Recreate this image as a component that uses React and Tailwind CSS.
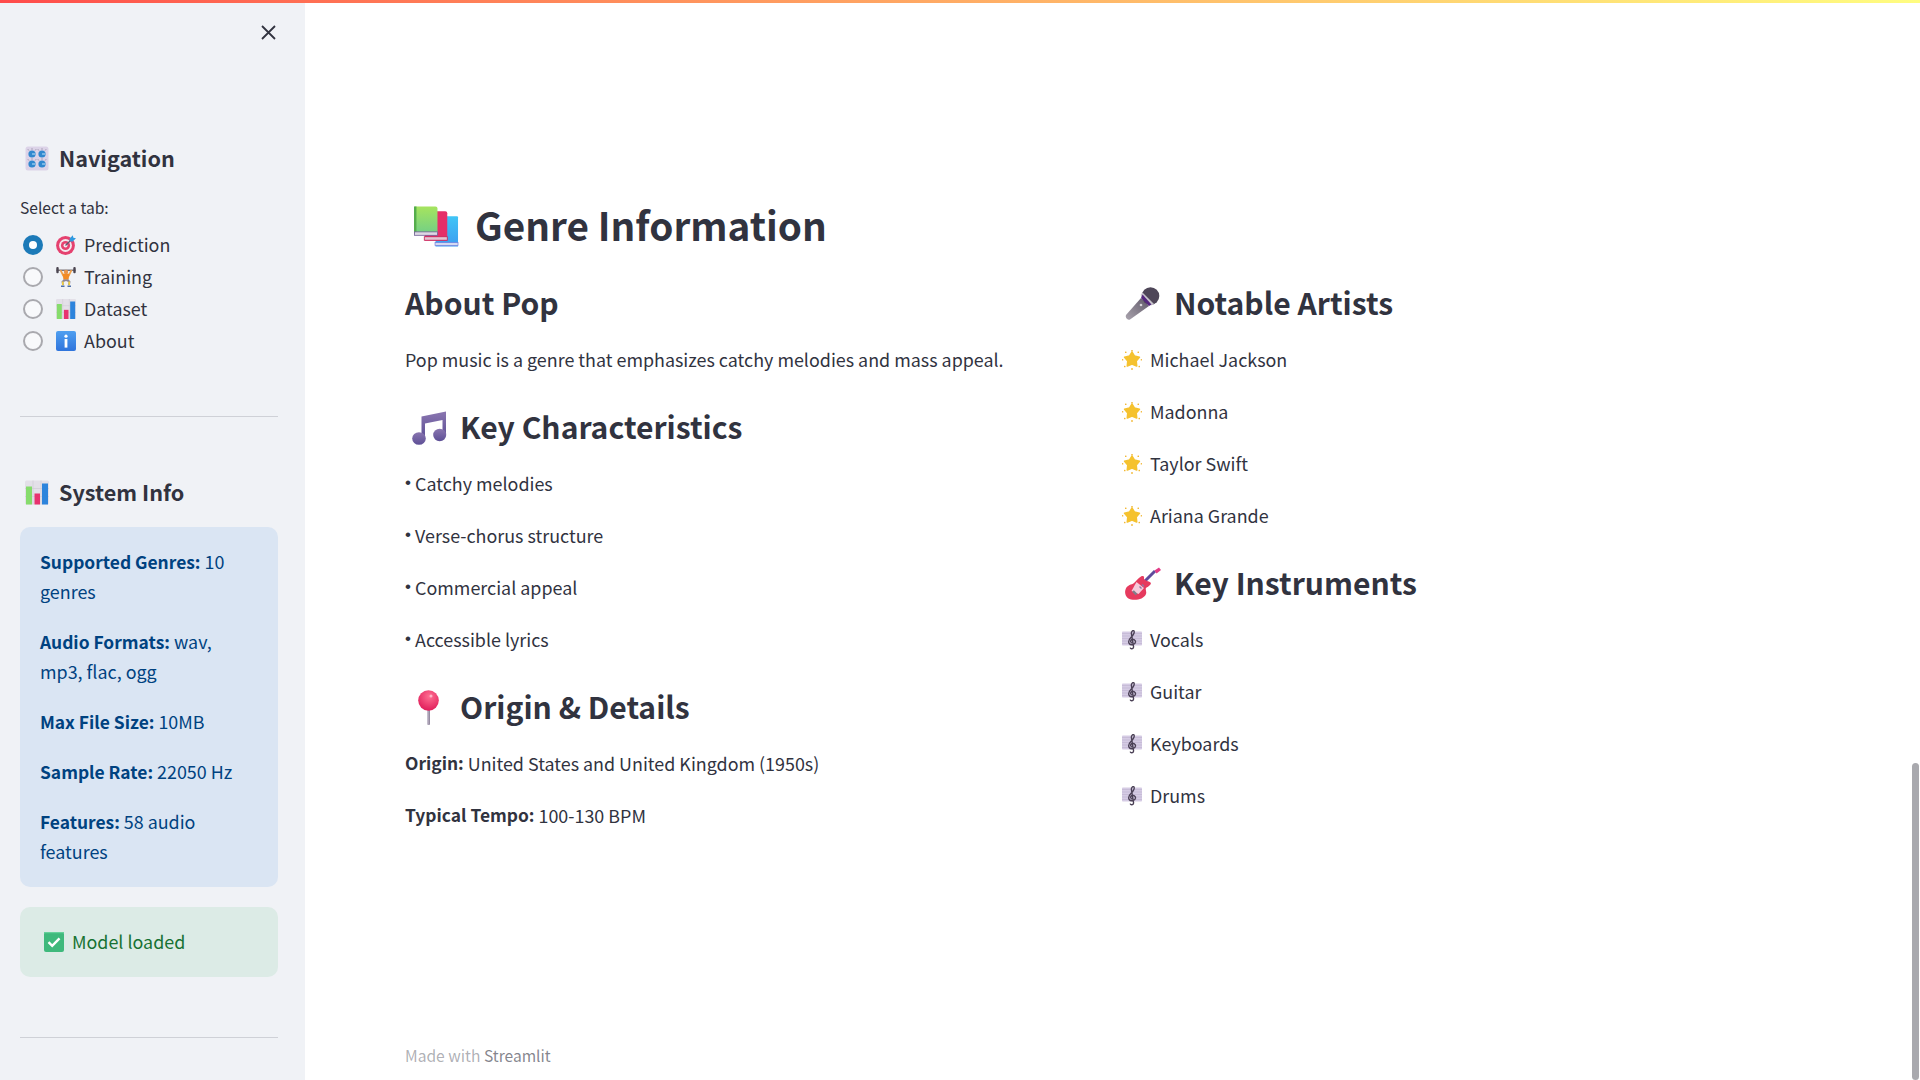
import React from "react";

const Knobs = ({ cls }) => (
  <svg viewBox="0 0 24 25" className={cls}>
    <rect x="0.5" y="0.5" width="23" height="24" rx="2.5" fill="#dcd3e8" />
    {[[7, 8], [17, 8], [7, 18], [17, 18]].map(([x, y], i) => (
      <g key={i}>
        <circle cx={x} cy={y} r="3.6" fill="#3188cf" />
        <path d={`M${x} ${y}h3`} stroke="#a9d6f2" strokeWidth="1.200" />
        <path d={`M${x - 4} ${y - 4.6}l.8 1M${x} ${y - 5.6}v1.200M${x + 4} ${y - 4.6}l-.8 1`} stroke="#77748a" strokeWidth=".8" />
      </g>
    ))}
  </svg>
);

const Target = ({ cls }) => (
  <svg viewBox="0 0 20 20" className={cls}>
    <circle cx="9.500" cy="10.500" r="9.400" fill="#e5416f" />
    <circle cx="9.500" cy="10.500" r="6.400" fill="#f4e8ee" />
    <circle cx="9.500" cy="10.500" r="4.600" fill="#e5416f" />
    <circle cx="9.500" cy="10.500" r="2" fill="#f4e8ee" />
    <path d="M9.500 10.500 16 4" stroke="#5b5c73" strokeWidth="1.300" />
    <path d="M13.500 3.800 16.800 0.200 17.400 2.700 20 3.300 16.400 6.800 14 6.200Z" fill="#2f9ae0" />
  </svg>
);

const Lifter = ({ cls }) => (
  <svg viewBox="0 0 20 20" className={cls}>
    <rect x="0.500" y="2.600" width="19" height="1.200" fill="#5b5560" />
    <rect x="0.300" y="0" width="2.400" height="6.200" rx="1" fill="#4a4550" />
    <rect x="17.300" y="0" width="2.400" height="6.200" rx="1" fill="#4a4550" />
    <path d="M4.500 3.200 7.500 9M15.500 3.200 12.500 9" stroke="#f0a04b" strokeWidth="1.800" />
    <circle cx="10" cy="5" r="2.200" fill="#e8934a" />
    <path d="M6.500 6.800h7l-1 6H7.500Z" fill="#f28a25" />
    <path d="M7.500 12.500h5l2 2-.6 3.500h-1.800l.4-3-2.500-.9-2.500.9.4 3H6.100l-.6-3.500Z" fill="#8a8496" />
    <path d="M6.800 14.500v3.800M13.200 14.500v3.800" stroke="#f2cf3d" strokeWidth="1.600" />
    <path d="M5 19.300h3.500M11.500 19.300h3.500" stroke="#4f6fa8" strokeWidth="1.400" />
  </svg>
);

const Chart = ({ cls }) => (
  <svg viewBox="0 0 24 24" className={cls}>
    <rect x="0" y="0" width="24" height="24" rx="1.500" fill="#e3e0e8" />
    <path d="M8 0v24M16 0v24M0 8h24M0 16h24" stroke="#cfccd6" strokeWidth=".7" />
    <rect x="1" y="6" width="6" height="18" fill="#86dc6c" />
    <rect x="9.500" y="13" width="5.500" height="11" fill="#e8336f" />
    <rect x="17" y="3" width="6" height="21" fill="#2d84dc" />
  </svg>
);

const Info = ({ cls }) => (
  <svg viewBox="0 0 20 20" className={cls}>
    <defs>
      <linearGradient id="infoG" x1="0" y1="0" x2="0" y2="1">
        <stop offset="0" stopColor="#4f9ff0" />
        <stop offset="1" stopColor="#2f74dc" />
      </linearGradient>
    </defs>
    <rect width="20" height="20" rx="2" fill="url(#infoG)" />
    <circle cx="10" cy="5.200" r="1.600" fill="#fff" />
    <rect x="8.600" y="8" width="2.800" height="8.600" fill="#fff" />
  </svg>
);

const Check = ({ cls }) => (
  <svg viewBox="0 0 20 20" className={cls}>
    <rect width="20" height="20" rx="2" fill="#3fb97c" />
    <rect width="20" height="1.200" fill="#66d19b" />
    <path d="M4.500 10.200 8.200 13.800 15.500 6.400" fill="none" stroke="#fff" strokeWidth="2.400" />
  </svg>
);

const Books = ({ cls }) => (
  <svg viewBox="0 0 46 41" className={cls}>
    <defs>
      <linearGradient id="bkG" x1="0" y1="0" x2="0" y2="1">
        <stop offset="0" stopColor="#a6e45e" />
        <stop offset="1" stopColor="#72cf86" />
      </linearGradient>
      <linearGradient id="bkB" x1="0" y1="0" x2="0" y2="1">
        <stop offset="0" stopColor="#41c5f6" />
        <stop offset="1" stopColor="#3c9cf0" />
      </linearGradient>
    </defs>
    <path d="M22 10h22a1 1 0 0 1 1 1v30H22Z" fill="url(#bkB)" />
    <rect x="21.500" y="37" width="23.500" height="3" fill="#d5d9f2" stroke="#6e7ee0" strokeWidth=".7" />
    <path d="M11 5h21a2 2 0 0 1 2 2v28H11Z" fill="#e62e68" />
    <rect x="10.500" y="31" width="23.500" height="3.500" fill="#e3c5d3" stroke="#c41f56" strokeWidth=".8" />
    <path d="M2 0h20a2 2 0 0 1 2 2v26H0V2a2 2 0 0 1 2-2Z" fill="url(#bkG)" />
    <rect x="0" y="0" width="2.500" height="28" fill="#55ad4c" />
    <rect x="0.400" y="26" width="23.600" height="3.500" fill="#dcd8e4" stroke="#6f5d95" strokeWidth=".8" />
  </svg>
);

const Notes = ({ cls }) => (
  <svg viewBox="0 0 35 35" className={cls}>
    <defs>
      <linearGradient id="ntG" x1="0" y1="0" x2="0" y2="1">
        <stop offset="0" stopColor="#8a76b0" />
        <stop offset="1" stopColor="#5d4f96" />
      </linearGradient>
    </defs>
    <path d="M9.500 28V6.500L34 1.500V25h-3.500V10L13 13.500V28Z" fill="url(#ntG)" />
    <ellipse cx="7" cy="28.500" rx="6.800" ry="6.300" fill="url(#ntG)" />
    <ellipse cx="27.700" cy="25" rx="6.500" ry="6.200" fill="url(#ntG)" />
  </svg>
);

const Mic = ({ cls }) => (
  <svg viewBox="0 0 35 33" className={cls}>
    <defs>
      <linearGradient id="miG" x1="0" y1="1" x2="1" y2="0">
        <stop offset="0" stopColor="#a9a3ad" />
        <stop offset="1" stopColor="#5f5868" />
      </linearGradient>
    </defs>
    <path d="M1 28 16 11 24 19 5 32.500C3 33.500 0 31 1 28Z" fill="url(#miG)" />
    <circle cx="25.500" cy="9" r="8.800" fill="#4e4658" />
    <path d="M17.500 5.500 29 17 26 18.500 15.500 8Z" fill="#c7c3cc" />
    <path d="M16 11 24 19 26.500 17.500 17.500 7.500Z" fill="#55287e" />
    <circle cx="16" cy="18" r="1.300" fill="#d9d6dc" />
  </svg>
);

const Pin = ({ cls }) => (
  <svg viewBox="0 0 21 35" className={cls}>
    <defs>
      <radialGradient id="pnG" cx=".55" cy=".3" r=".7">
        <stop offset="0" stopColor="#ff6f92" />
        <stop offset="1" stopColor="#e01e5a" />
      </radialGradient>
      <linearGradient id="pnS" x1="0" y1="0" x2="1" y2="0">
        <stop offset="0" stopColor="#cfc8d6" />
        <stop offset="1" stopColor="#8a7f97" />
      </linearGradient>
    </defs>
    <rect x="9" y="17" width="3" height="18" rx="1" fill="url(#pnS)" />
    <circle cx="10.500" cy="10.500" r="10.300" fill="url(#pnG)" />
    <circle cx="13" cy="6" r="1.500" fill="#ffb3c6" />
  </svg>
);

const Star = ({ cls }) => (
  <svg viewBox="0 0 20 20" className={cls}>
    <path d="M10 2.200 12.500 6.100 17.400 7.200 14.200 11.100 14.700 16 10 14.100 5.300 16 5.800 11.100 2.600 7.200 7.500 6.100Z" fill="#f5c22f" stroke="#f5c22f" strokeWidth="1.600" strokeLinejoin="round" />
    <g fill="#f2b632">
      <rect x="9.200" y="0" width="1.600" height="1.400" rx=".5" />
      <rect x="9.200" y="18" width="1.600" height="2" rx=".7" />
      <rect x="0" y="9" width="1.300" height="1.400" rx=".5" />
      <rect x="18.700" y="9" width="1.300" height="1.400" rx=".5" />
      <rect x="3" y="1.500" width="1.500" height="1.500" rx=".5" />
      <rect x="15.500" y="1.500" width="1.500" height="1.500" rx=".5" />
      <rect x="2" y="15.800" width="1.500" height="1.500" rx=".5" />
      <rect x="16.500" y="15.800" width="1.500" height="1.500" rx=".5" />
    </g>
  </svg>
);

const Score = ({ cls }) => (
  <svg viewBox="0 0 20 20" className={cls}>
    <rect x="0" y="1.500" width="20" height="14" rx=".8" fill="#d5cbe4" />
    <path d="M0 3.500h20M0 6h20M0 8.500h20M0 11h20M0 13.500h20" stroke="#bdb1cf" strokeWidth=".6" />
    <path d="M8.200 17.600c.4 1.700 3.200 1.700 3.400-.6L9.400 3.500C9.200 1.200 11.200-.2 12 1c1 2-1 4.500-3.300 6.800-2 2-2.500 4-1.500 5.700 1.300 2 5.800 1.700 6.300-1.300.3-2.400-2.800-3.900-4.300-2.200-1 1.200-.4 2.800 1 3" fill="none" stroke="#4a4055" strokeWidth="1.400" />
  </svg>
);

const Guitar = ({ cls }) => (
  <svg viewBox="0 0 36 33" className={cls}>
    <path d="M17 17 30 4" stroke="#5f4b9c" strokeWidth="3" />
    <path d="M29.500 3.500 34 0.500 36 3 33.500 5 31.500 6.500Z" fill="#e23b86" />
    <path d="M16 9.500C18 8.500 19.500 9 19 11.500 18.500 13.500 24 14 25.500 15.500 27 17 24 19 21.500 20.500 19.500 22 22 24 21 27 19 32 12 33.500 6 32.500 1 31.500-1 26 .7 22 2.500 17.500 6.500 18 9 16 11 14.500 13 11 16 9.500Z" fill="#e63a5e" />
    <path d="M11.500 15 19 21 13.500 27 6.500 24Z" fill="#f7c9da" />
    <path d="M8 24 11.500 27.500" stroke="#7f7f8c" strokeWidth="2.400" />
    <path d="M14.500 19.500 16.500 21.500M17 17.500 19 19.500" stroke="#8d7aa5" strokeWidth="1.400" />
  </svg>
);

const Heading = ({ icon, children }) => (
  <h3 className="flex h-[62px] items-center text-[30.100px] font-semibold text-[#31333f] mb-[10px]">
    {icon}
    {children}
  </h3>
);

const Row = ({ icon, children }) => (
  <p className="flex items-center h-[32px] mb-[20px] text-[17.900px]">
    {icon}
    <span className="flex items-center pb-[2px]">{children}</span>
  </p>
);

const Bullet = ({ children }) => (
  <Row>
    <span className="w-[10px] font-['Liberation_Sans',sans-serif] text-[17px]">•</span>
    {children}
  </Row>
);

const B = ({ children }) => <b className="text-[17.400px] leading-none font-semibold">{children}</b>;

const Radio = ({ checked, icon, label }) => (
  <div className="flex items-center h-[32px] pl-[3px]">
    {checked ? (
      <span className="flex h-[20px] w-[20px] items-center justify-center rounded-full bg-[#1c7ab8]">
        <span className="h-[8px] w-[8px] rounded-full bg-white" />
      </span>
    ) : (
      <span className="h-[20px] w-[20px] rounded-full border-2 border-[#a9a9ae] bg-[#f8f9fb]" />
    )}
    <span className="ml-[13px] mr-[8px] flex h-[20px] w-[20px] items-center justify-center">{icon}</span>
    <span className="pb-[2px] text-[17.900px] leading-[30px]">{label}</span>
  </div>
);

export default function App() {
  return (
    <div className="relative flex h-screen overflow-hidden bg-white font-['Noto_Sans_CJK_SC',sans-serif] text-[#31333f]">
      <div className="absolute left-0 right-0 top-0 h-[3px] bg-gradient-to-r from-[#ff4b4b] to-[#fffd80]" />

      <aside className="flex w-[305px] shrink-0 flex-col bg-[#f0f2f6] pl-[20px] pr-[27px]">
        <div className="flex h-[138px] shrink-0 justify-end pt-[25px] pr-[2px]">
          <svg viewBox="0 0 15 15" className="h-[15px] w-[15px]">
            <path d="M1 1 14 14M14 1 1 14" stroke="#31333f" strokeWidth="1.800" />
          </svg>
        </div>
        <div className="flex h-[40px] shrink-0 items-center pl-[5px] text-[21.600px] font-semibold">
          <Knobs cls="mr-[10px] h-[25px] w-[24px]" />
          Navigation
        </div>
        <div className="mt-[17px] h-[26px] text-[15.600px] leading-[24px]">Select a tab:</div>
        <div className="mt-[8px] flex flex-col">
          <Radio checked icon={<Target cls="h-[20px] w-[20px]" />} label="Prediction" />
          <Radio icon={<Lifter cls="h-[20px] w-[20px]" />} label="Training" />
          <Radio icon={<Chart cls="h-[20px] w-[20px]" />} label="Dataset" />
          <Radio icon={<Info cls="h-[20px] w-[20px]" />} label="About" />
        </div>
        <div className="mt-[59px] h-px bg-[#cfd1d7]" />
        <div className="mt-[55px] flex h-[40px] items-center pl-[5px] text-[21.600px] font-semibold">
          <Chart cls="mr-[10px] h-[25px] w-[24px]" />
          System Info
        </div>
        <div className="mt-[15px] rounded-[10px] bg-[#dae5f3] pb-[21px] pl-[20px] pr-[20px] pt-[19px] text-[17.900px] leading-[30px] text-[#004280]">
          <p className="mb-[20px]"><B>Supported Genres:</B> 10 genres</p>
          <p className="mb-[20px]"><B>Audio Formats:</B> wav, mp3, flac, ogg</p>
          <p className="mb-[20px]"><B>Max File Size:</B> 10MB</p>
          <p className="mb-[20px]"><B>Sample Rate:</B> 22050 Hz</p>
          <p><B>Features:</B> 58 audio features</p>
        </div>
        <div className="mt-[20px] flex h-[70px] items-center rounded-[10px] bg-[#dcebe6] pl-[24px] text-[17.900px] leading-[30px] text-[#177233]">
          <Check cls="mr-[8px] h-[20px] w-[20px]" />
          <span className="pb-[2px]">Model loaded</span>
        </div>
        <div className="mt-[60px] h-px bg-[#cfd1d7]" />
      </aside>

      <main className="flex min-w-0 flex-1 flex-col pl-[100px] pr-[103px] pt-[190px]">
        <h1 className="flex h-[70px] shrink-0 items-center text-[38.700px] font-semibold">
          <Books cls="ml-[9px] mr-[16px] mt-[3px] h-[41px] w-[45px]" />
          <span className="pb-[2px]">Genre Information</span>
        </h1>
        <div className="mt-[12px] grid grid-cols-2 gap-[20px]">
          <div>
            <Heading>About Pop</Heading>
            <Row>Pop music is a genre that emphasizes catchy melodies and mass appeal.</Row>
            <Heading icon={<Notes cls="ml-[7px] mr-[13px] h-[35px] w-[35px]" />}>Key Characteristics</Heading>
            <Bullet>Catchy melodies</Bullet>
            <Bullet>Verse-chorus structure</Bullet>
            <Bullet>Commercial appeal</Bullet>
            <Bullet>Accessible lyrics</Bullet>
            <Heading icon={<Pin cls="ml-[13px] mr-[21px] h-[35px] w-[21px]" />}>Origin &amp; Details</Heading>
            <Row><B>Origin:</B><span className="ml-[4px]">United States and United Kingdom (1950s)</span></Row>
            <Row><B>Typical Tempo:</B><span className="ml-[4px]">100-130 BPM</span></Row>
          </div>
          <div>
            <Heading icon={<Mic cls="ml-[4px] mr-[14px] h-[33px] w-[35px]" />}>Notable Artists</Heading>
            {["Michael Jackson", "Madonna", "Taylor Swift", "Ariana Grande"].map((n) => (
              <Row key={n} icon={<Star cls="ml-[1px] mr-[8px] h-[20px] w-[20px]" />}>{n}</Row>
            ))}
            <Heading icon={<Guitar cls="ml-[4px] mr-[13px] h-[33px] w-[36px]" />}>Key Instruments</Heading>
            {["Vocals", "Guitar", "Keyboards", "Drums"].map((n) => (
              <Row key={n} icon={<Score cls="ml-[1px] mr-[8px] h-[20px] w-[20px]" />}>{n}</Row>
            ))}
          </div>
        </div>
        <div className="mt-auto mb-[12px] h-[26px] text-[15.600px] leading-[26px] text-[#31333f66]">
          Made with <span className="text-[#31333f99]">Streamlit</span>
        </div>
      </main>

      <div className="absolute bottom-0 right-[1px] top-[763px] w-[7px] rounded-full bg-[#a9a9ae]" />
    </div>
  );
}
